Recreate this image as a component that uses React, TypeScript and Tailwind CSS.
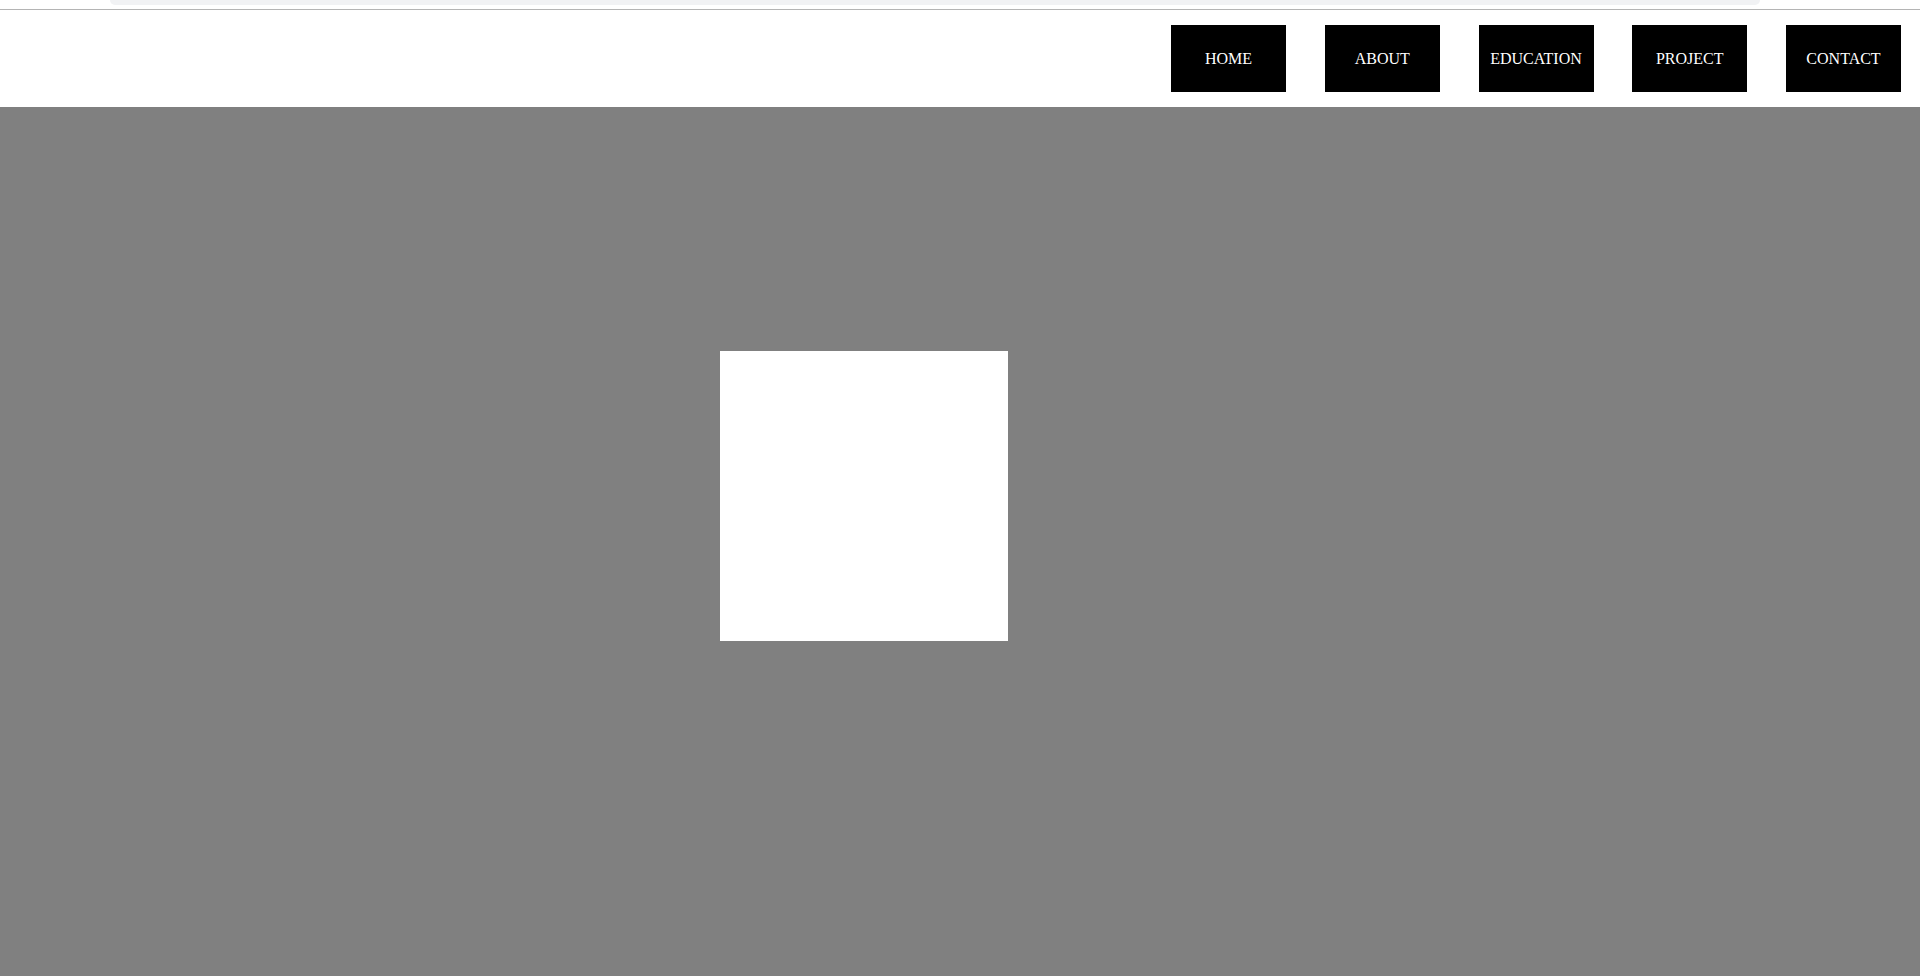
import React from "react";

export default function App() {
  const items = ["HOME", "ABOUT", "EDUCATION", "PROJECT", "CONTACT"];
  return (
    <div className="w-[1920px] h-[976px] overflow-hidden bg-white flex flex-col" style={{ fontFamily: '"Liberation Serif", "Times New Roman", serif' }}>
      <div className="h-[10px] shrink-0 border-b border-[#b4b4b4] pl-[110px]">
        <div className="w-[1650px] h-[5px] bg-[#f1f2f4] rounded-b-[10px]" />
      </div>
      <header className="h-[97px] shrink-0 flex items-center justify-end gap-[38.75px] pr-[19px]">
        {items.map((t) => (
          <a key={t} className="w-[115px] h-[67px] bg-black text-white text-[16px] flex items-center justify-center">
            {t}
          </a>
        ))}
      </header>
      <main className="flex-1 bg-[#808080] pl-[720px] pt-[244px]">
        <div className="w-[288px] h-[290px] bg-white" />
      </main>
    </div>
  );
}
